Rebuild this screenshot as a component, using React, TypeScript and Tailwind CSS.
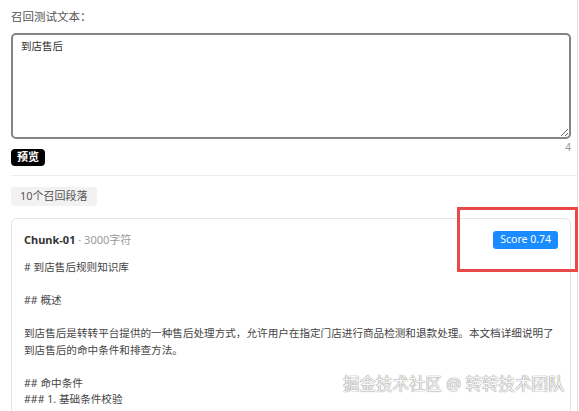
import React from 'react';

const chunkLines = [
  '# 到店售后规则知识库',
  '',
  '## 概述',
  '',
  '到店售后是转转平台提供的一种售后处理方式，允许用户在指定门店进行商品检测和退款处理。本文档详细说明了到店售后的命中条件和排查方法。',
  '',
  '## 命中条件',
  '### 1. 基础条件校验',
];

const App = () => {
  return (
    <div className="relative w-[579px] h-[411px] overflow-hidden bg-white font-['Noto_Sans','Noto_Sans_CJK_SC',sans-serif]">
      <div className="w-[578px] h-full border-r border-[#e3e3e3] pl-[11px] pt-[9px]">
        {/* Query input */}
        <div className="text-[11.5px] leading-[16px] text-[#555]">召回测试文本：</div>
        <textarea
          readOnly
          defaultValue="到店售后"
          className="mt-[8px] block w-[560px] h-[106px] rounded-[5px] border-2 border-[#858585] px-[8px] py-[3px] text-[10.5px] leading-[16px] text-[#333] outline-none"
        />
        <div className="flex h-[10px] w-[560px] justify-end">
          <span className="mt-[2px] text-[10px] leading-[12px] text-[#999]">4</span>
        </div>

        <button className="flex h-[17px] items-center rounded-[4px] bg-black px-[6px] text-[11px] font-bold text-white">
          预览
        </button>

        <div className="mt-[9px] h-px bg-[#ececec]" />

        {/* Results */}
        <div className="mt-[11px] inline-flex h-[19px] items-center rounded-[2px] bg-[#f2f2f2] px-[9px] text-[11px] text-[#555]">
          10个召回段落
        </div>

        <div className="mt-[12px] w-[560px] rounded-[6px] border border-[#e4e4e4] pl-[12px] pr-[12px] pt-[12px] pb-4">
          <div className="flex h-[18px] items-center justify-between">
            <div className="text-[11px] leading-[16px]">
              <span className="font-bold text-[#333]">Chunk-01</span>
              <span className="text-[#999]"> · 3000字符</span>
            </div>
            <span className="flex h-[18px] items-center rounded-[3px] bg-[#1a8cff] px-[7px] text-[10.5px] text-white">
              Score 0.74
            </span>
          </div>
          <div className="mt-[10px] text-[10.6px] leading-[16.5px] text-[#444]">
            {chunkLines.map((line, i) =>
              line ? (
                <div key={i} className={i === 4 ? '' : 'w-fit'}>
                  {line}
                </div>
              ) : (
                <div key={i} className="h-[16.5px]" />
              )
            )}
          </div>
        </div>
      </div>

      {/* annotation box */}
      <div className="absolute left-[457px] top-[207px] h-[65px] w-[121px] border-[3px] border-[#e84a4a]" />

      {/* watermark */}
      <div className="absolute left-[343px] top-[373px] text-[16.5px] leading-[22px] text-[#f7f7f7] [text-shadow:0_0_1px_#777,0_0_1px_#999]">
        掘金技术社区 @ 转转技术团队
      </div>
    </div>
  );
};

export default App;
